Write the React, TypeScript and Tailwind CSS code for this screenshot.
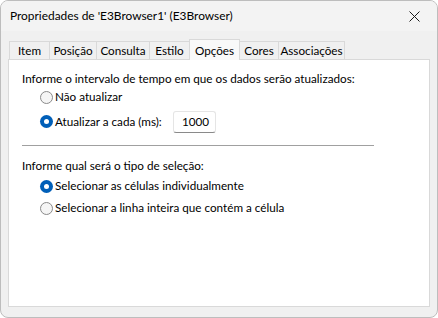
import React from 'react';

const tabs = ['Item', 'Posição', 'Consulta', 'Estilo', 'Opções', 'Cores', 'Associações'];
const tabWidths = [41, 48, 54, 41, 51, 40, 67];

function Radio({ checked }: { checked: boolean }) {
  return checked ? (
    <span className="w-[13px] h-[13px] rounded-full bg-[#005fb8] flex items-center justify-center shrink-0">
      <span className="w-[5px] h-[5px] rounded-full bg-white" />
    </span>
  ) : (
    <span className="w-[13px] h-[13px] rounded-full border border-[#8a8a8a] bg-[#f5f5f5] shrink-0" />
  );
}

export default function App() {
  return (
    <div className="w-[438px] h-[318px] bg-white">
      <div
        className="w-[438px] h-[318px] rounded-[8px] border border-[#bdbdbd] bg-[#f0f0f0] overflow-hidden flex flex-col text-[11.7px] text-black whitespace-nowrap"
        style={{ fontFamily: 'Lato, "Noto Sans", sans-serif' }}
      >
        <div className="h-[30px] bg-[#f3f3f3] flex items-center justify-between pl-[9px] pr-[17px] shrink-0">
          <span className="text-[11.9px]">Propriedades de 'E3Browser1' (E3Browser)</span>
          <svg width="11" height="11" viewBox="0 0 11 11" className="text-[#1a1a1a]">
            <path d="M0.5 0.5 L10.5 10.5 M10.5 0.5 L0.5 10.5" stroke="currentColor" strokeWidth="1" />
          </svg>
        </div>
        <div className="flex-1 px-[7px] pt-[8px] pb-[10px] flex flex-col">
          <div className="flex items-end h-[20px] pl-[1px]">
            {tabs.map((t, i) =>
              t === 'Opções' ? (
                <div
                  key={t}
                  className="h-[21px] bg-[#f9f9f9] border border-b-0 border-[#d9d9d9] -mb-px -ml-px relative z-10 flex items-start justify-center pt-[2px]"
                  style={{ width: tabWidths[i] }}
                >
                  {t}
                </div>
              ) : (
                <div
                  key={t}
                  className="h-[18px] bg-[#f0f0f0] border border-b-0 border-[#d9d9d9] -ml-px first:ml-0 flex items-center justify-center"
                  style={{ width: tabWidths[i] }}
                >
                  {t}
                </div>
              )
            )}
          </div>
          <div className="flex-1 bg-white border border-[#d9d9d9] pl-[13px] pt-[10px]">
            <div className="leading-[16px]">Informe o intervalo de tempo em que os dados serão atualizados:</div>
            <div className="pl-[18px] flex flex-col">
              <label className="flex items-center gap-[2px] h-[20px] mt-[1px]">
                <Radio checked={false} />
                <span>Não atualizar</span>
              </label>
              <label className="flex items-center h-[24px] mt-[3px]">
                <span className="flex items-center gap-[2px] w-[133px]">
                  <Radio checked />
                  <span>Atualizar a cada (ms):</span>
                </span>
                <span className="w-[43px] h-[22px] bg-white border border-[#e5e5e5] border-b-[#8a8a8a] rounded-[3px] flex items-center justify-end pr-[6px]">
                  1000
                </span>
              </label>
            </div>
            <div className="h-px bg-[#a0a0a0] mt-[11px] w-[352px]" />
            <div className="leading-[16px] mt-[11px]">Informe qual será o tipo de seleção:</div>
            <div className="pl-[18px] flex flex-col">
              <label className="flex items-center gap-[2px] h-[20px] mt-[3px]">
                <Radio checked />
                <span>Selecionar as células individualmente</span>
              </label>
              <label className="flex items-center gap-[2px] h-[20px] mt-[2px]">
                <Radio checked={false} />
                <span>Selecionar a linha inteira que contém a célula</span>
              </label>
            </div>
          </div>
        </div>
      </div>
    </div>
  );
}
